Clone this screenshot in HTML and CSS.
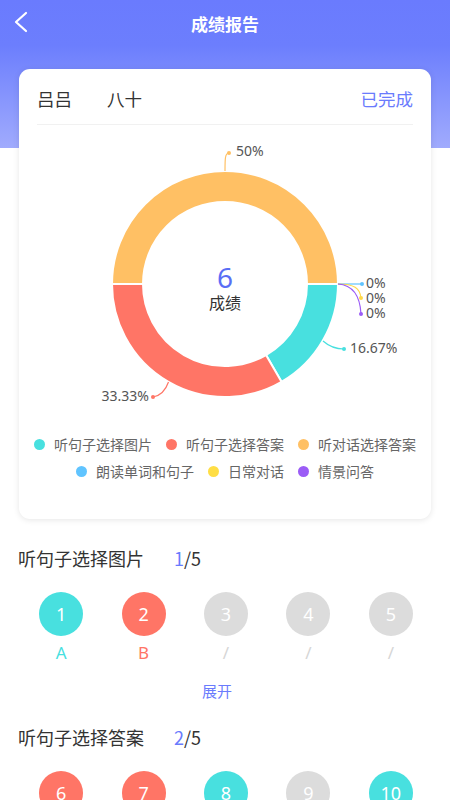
FILE: index.html
```html
<!DOCTYPE html>
<html lang="zh">
<head>
<meta charset="utf-8">
<title>成绩报告</title>
<link rel="stylesheet" href="styles.css">
</head>
<body>
<div class="page">
  <div class="topbar">
    <svg class="back" width="20" height="24" viewBox="0 0 20 24"><polyline points="13,2 3,11 13,20" fill="none" stroke="#fff" stroke-width="2.2" stroke-linecap="round" stroke-linejoin="round"/></svg>
    <div class="title">成绩报告</div>
  </div>

  <div class="card">
    <div class="card-head">
      <span class="name">吕吕</span>
      <span class="cls">八十</span>
      <span class="status">已完成</span>
    </div>
    <svg class="chart" width="412" height="300" viewBox="0 0 412 300">
      <g stroke="#fff" stroke-width="2" stroke-linejoin="round">
        <path d="M319 159 A113 113 0 0 1 262.5 256.86 L247 230.01 A82 82 0 0 0 288 159 Z" fill="#48e0df"/>
        <path d="M262.5 256.86 A113 113 0 0 1 93 159 L124 159 A82 82 0 0 0 247 230.01 Z" fill="#ff7566"/>
        <path d="M93 159 A113 113 0 0 1 319 159 L288 159 A82 82 0 0 0 124 159 Z" fill="#ffc064"/>
      </g>
      <g fill="none" stroke-width="1.2">
        <path d="M206 46 C206 34 206 28 210 28" stroke="#ffc064"/>
        <path d="M304 216 Q313 224 325 224" stroke="#48e0df"/>
        <path d="M149.5 257 Q145 270 134 272" stroke="#ff7566"/>
        <path d="M319 159 L343 159" stroke="#60c4ff"/>
        <path d="M319 159 C335 159 341 163 342 173" stroke="#ffd84a"/>
        <path d="M319 159 C333 160 341 170 342 189" stroke="#9b5cf6"/>
      </g>
      <circle cx="210" cy="28" r="2" fill="#ffc064"/>
      <circle cx="325" cy="224" r="2" fill="#48e0df"/>
      <circle cx="134" cy="272" r="2" fill="#ff7566"/>
      <circle cx="343" cy="159" r="2" fill="#60c4ff"/>
      <circle cx="342" cy="173" r="2" fill="#ffd84a"/>
      <circle cx="342" cy="189" r="2" fill="#9b5cf6"/>
      <g class="lbl">
        <text x="217" y="31">50%</text>
        <text x="331" y="228">16.67%</text>
        <text x="130" y="276" text-anchor="end">33.33%</text>
        <text x="347" y="163">0%</text>
        <text x="347" y="178">0%</text>
        <text x="347" y="193">0%</text>
      </g>
      <text class="score" x="206" y="163" text-anchor="middle">6</text>
      <text class="score-l" x="206" y="184" text-anchor="middle">成绩</text>
    </svg>
    <div class="legend">
      <span class="li"><i class="dot c-teal"></i>听句子选择图片</span>
      <span class="li"><i class="dot c-red"></i>听句子选择答案</span>
      <span class="li"><i class="dot c-orange"></i>听对话选择答案</span>
      <span class="li"><i class="dot c-blue"></i>朗读单词和句子</span>
      <span class="li"><i class="dot c-yellow"></i>日常对话</span>
      <span class="li"><i class="dot c-purple"></i>情景问答</span>
    </div>
  </div>

  <section class="sec">
    <div class="sec-title">听句子选择图片<span class="count"><b>1</b>/5</span></div>
    <div class="grid">
      <div class="q"><span class="ball bg-teal">1</span><span class="ans t-teal">A</span></div>
      <div class="q"><span class="ball bg-red">2</span><span class="ans t-red">B</span></div>
      <div class="q"><span class="ball bg-gray">3</span><span class="ans t-gray">/</span></div>
      <div class="q"><span class="ball bg-gray">4</span><span class="ans t-gray">/</span></div>
      <div class="q"><span class="ball bg-gray">5</span><span class="ans t-gray">/</span></div>
    </div>
    <div class="more">展开</div>
  </section>

  <section class="sec sec2">
    <div class="sec-title">听句子选择答案<span class="count"><b>2</b>/5</span></div>
    <div class="grid">
      <div class="q"><span class="ball bg-red">6</span></div>
      <div class="q"><span class="ball bg-red">7</span></div>
      <div class="q"><span class="ball bg-teal">8</span></div>
      <div class="q"><span class="ball bg-gray">9</span></div>
      <div class="q"><span class="ball bg-teal">10</span></div>
    </div>
  </section>
</div>
</body>
</html>
```
FILE: styles.css
```css
* { box-sizing: border-box; }
html, body { margin: 0; padding: 0; }
body {
  width: 450px;
  height: 800px;
  overflow: hidden;
  background: #fff;
  font-family: "Noto Sans CJK SC", "Noto Sans", sans-serif;
  color: #333;
}
.page {
  background: linear-gradient(to bottom, #6a7bfe 0px, #6c7efd 45px, #a0abfd 148px, #fff 148px) no-repeat;
  background-size: 100% 148px;
}
.topbar {
  height: 48px;
  display: flex;
  align-items: center;
  justify-content: center;
  position: relative;
}
.back {
  position: absolute;
  left: 13px;
  top: 11px;
}
.title {
  color: #fff;
  font-size: 17px;
  font-weight: bold;
  line-height: 48px;
}
.card {
  margin: 21px 19px 0;
  background: #fff;
  border-radius: 11px;
  box-shadow: 0 1px 6px rgba(0,0,0,0.10);
  padding-bottom: 34px;
}
.card-head {
  margin: 0 18px;
  height: 56px;
  display: flex;
  align-items: center;
  border-bottom: 1px solid #f1f1f1;
  font-size: 17.5px;
  padding-top: 4px;
}
.name { color: #333; width: 70px; }
.cls { color: #333; }
.status { margin-left: auto; color: #6a7bfd; }
.chart { display: block; }
.lbl text {
  font-family: "Noto Sans", sans-serif;
  font-size: 14px;
  fill: #555;
}
.score {
  font-family: "Noto Sans", sans-serif;
  font-size: 28px;
  fill: #5a6ef5;
}
.score-l {
  font-size: 16px;
  fill: #333;
}
.legend {
  margin-top: 6px;
  display: flex;
  flex-wrap: wrap;
  justify-content: center;
  column-gap: 14px;
  padding: 0 6px;
  font-size: 14px;
  line-height: 27px;
  color: #666;
}
.li { display: inline-flex; align-items: center; }
.dot {
  display: inline-block;
  width: 11px;
  height: 11px;
  border-radius: 50%;
  margin-right: 9px;
}
.c-teal { background: #48e0df; }
.c-red { background: #ff7566; }
.c-orange { background: #ffc064; }
.c-blue { background: #60c4ff; }
.c-yellow { background: #ffde45; }
.c-purple { background: #9b5cf6; }

.sec { padding: 0 18px; margin-top: 27px; }
.sec2 { margin-top: 23px; }
.sec-title {
  font-size: 18px;
  line-height: 24px;
  color: #333;
}
.count { margin-left: 30px; }
.count b { font-weight: normal; color: #6a7bfd; }
.grid {
  margin: 22px 0 0 2px;
  display: grid;
  grid-template-columns: repeat(5, 1fr);
}
.q { display: flex; flex-direction: column; align-items: center; }
.ball {
  width: 44px;
  height: 44px;
  border-radius: 50%;
  color: #fff;
  font-size: 18px;
  display: flex;
  align-items: center;
  justify-content: center;
  font-family: "Noto Sans", sans-serif;
}
.bg-teal { background: #48e0df; }
.bg-red { background: #ff7566; }
.bg-gray { background: #dcdcdc; }
.ans {
  margin-top: 6px;
  font-size: 17px;
  line-height: 22px;
  font-family: "Noto Sans", sans-serif;
}
.t-teal { color: #48e0df; }
.t-red { color: #ff7566; }
.t-gray { color: #d6d6d6; }
.more {
  margin-top: 16px;
  text-align: center;
  padding-right: 16px;
  font-size: 15px;
  line-height: 22px;
  color: #6a7bfd;
}
```
